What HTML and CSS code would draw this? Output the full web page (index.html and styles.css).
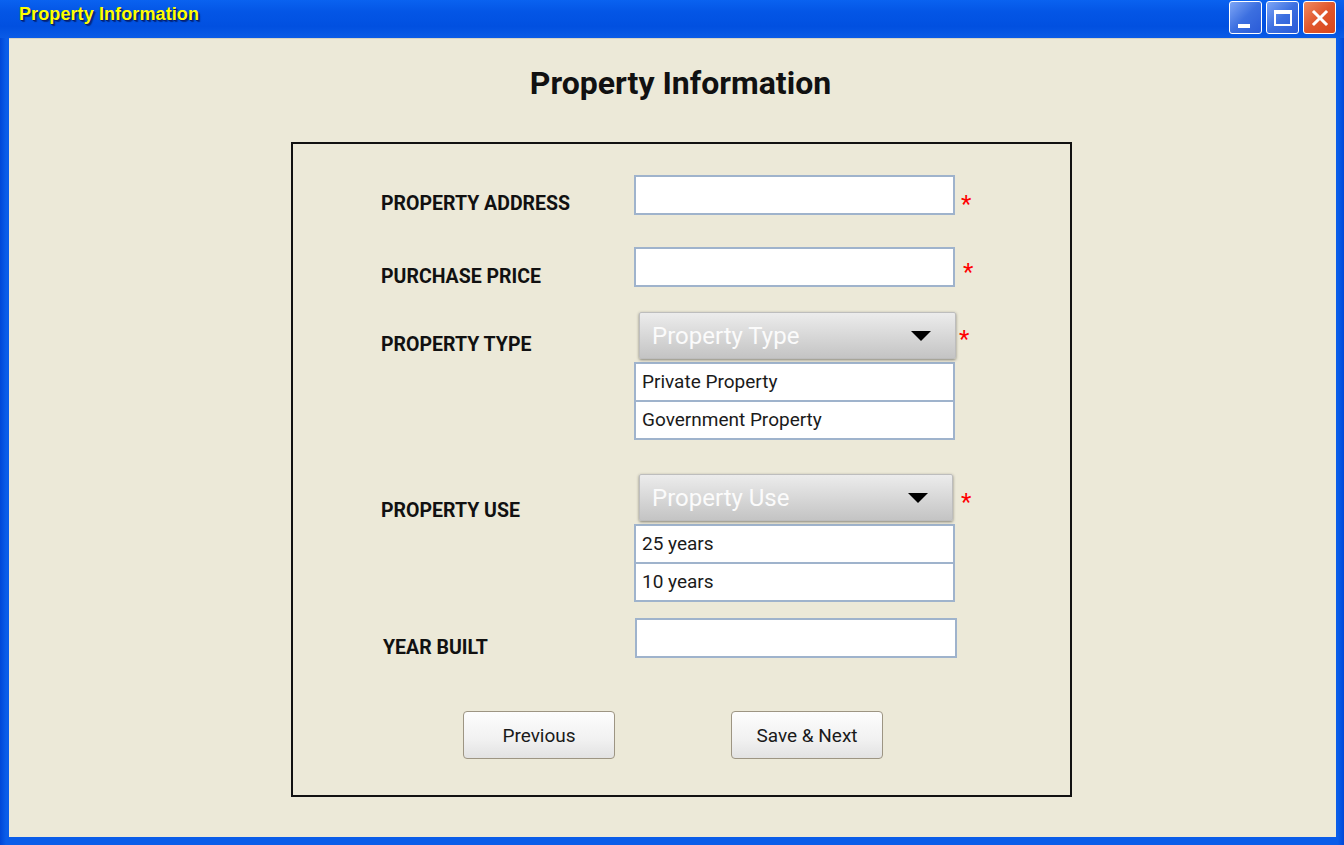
FILE: index.html
```html
<!DOCTYPE html>
<html lang="en">
<head>
    <meta charset="UTF-8">
    <title>Property Information</title>
    <link rel="stylesheet" href="styles.css">
</head>
<body>
<div class="window">
    <div class="titlebar">
        <span class="titlebar-text">Property Information</span>
        <div class="win-buttons">
            <span class="win-btn"><span class="icon-min"></span></span>
            <span class="win-btn"><span class="icon-max"></span></span>
            <span class="win-btn close">
                <svg width="20" height="20" viewBox="0 0 20 20"><path d="M4 4 L16 16 M16 4 L4 16" stroke="#fff" stroke-width="3" stroke-linecap="square"/></svg>
            </span>
        </div>
    </div>

    <div class="content">
        <h1>Property Information</h1>

        <div class="form-box">
            <div class="row row-address">
                <label class="label">PROPERTY ADDRESS</label>
                <div class="field">
                    <input class="text-input" type="text">
                    <span class="required">*</span>
                </div>
            </div>

            <div class="row row-price">
                <label class="label">PURCHASE PRICE</label>
                <div class="field">
                    <input class="text-input" type="text">
                    <span class="required">*</span>
                </div>
            </div>

            <div class="row row-type">
                <label class="label">PROPERTY TYPE</label>
                <div>
                    <div class="field">
                        <div class="dropdown">
                            <span>Property Type</span>
                            <span class="arrow"></span>
                        </div>
                        <span class="required">*</span>
                    </div>
                    <ul class="options">
                        <li>Private Property</li>
                        <li>Government Property</li>
                    </ul>
                </div>
            </div>

            <div class="row row-use">
                <label class="label">PROPERTY USE</label>
                <div>
                    <div class="field">
                        <div class="dropdown narrow">
                            <span>Property Use</span>
                            <span class="arrow"></span>
                        </div>
                        <span class="required">*</span>
                    </div>
                    <ul class="options">
                        <li>25 years</li>
                        <li>10 years</li>
                    </ul>
                </div>
            </div>

            <div class="row row-year">
                <label class="label">YEAR BUILT</label>
                <div class="field">
                    <input class="text-input wide" type="text">
                </div>
            </div>

            <div class="actions">
                <button class="btn">Previous</button>
                <button class="btn">Save &amp; Next</button>
            </div>
        </div>
    </div>
</div>
</body>
</html>
```

FILE: styles.css
```css
body {
    margin: 0;
    padding: 0;
    font-family: Roboto, "Liberation Sans", sans-serif;
    background-color: #0a5be6;
}

.window {
    width: 1344px;
    height: 845px;
    background: linear-gradient(to right, #0047d8, #0a5de9 6px, #0a5de9 calc(100% - 6px), #0047d8);
    display: flex;
    flex-direction: column;
    overflow: hidden;
}

.titlebar {
    height: 38px;
    flex-shrink: 0;
    display: flex;
    align-items: flex-start;
    justify-content: space-between;
    background: linear-gradient(#0a62f0 0%, #0456e6 30%, #0150e0 70%, #0a5be6 100%);
}

.titlebar-text {
    margin: 4px 0 0 19px;
    font-family: "Liberation Sans", Arial, sans-serif;
    font-weight: bold;
    font-size: 18px;
    letter-spacing: 0.1px;
    color: #ffff00;
    text-shadow: 1px 1px 0 #0a1f70, 2px 2px 1px rgba(0, 0, 40, 0.5);
}

.win-buttons {
    display: flex;
    gap: 4px;
    margin: 1px 8px 0 0;
}

.win-btn {
    width: 31px;
    height: 31px;
    border: 1px solid #fff;
    border-radius: 3px;
    background: linear-gradient(135deg, #7ea6f6, #3c6fe0 50%, #2a5bd8);
    display: flex;
    align-items: center;
    justify-content: center;
}

.win-btn.close {
    background: linear-gradient(135deg, #f08a60, #e0562c 50%, #d8461c);
}

.icon-min {
    width: 12px;
    height: 4px;
    background: #fff;
    margin-top: 16px;
    margin-right: 4px;
}

.icon-max {
    width: 18px;
    height: 16px;
    border: 2px solid #fff;
    border-top-width: 4px;
    box-sizing: border-box;
}

.content {
    flex: 1;
    margin: 0 8px 8px 9px;
    background-color: #ece9d8;
    border-top: 1px solid #d8d4c4;
}

h1 {
    margin: 24px 0 0;
    padding-left: 16px;
    text-align: center;
    font-size: 32px;
    line-height: 40px;
    font-weight: bold;
    color: #111;
}

.form-box {
    box-sizing: border-box;
    width: 781px;
    height: 655px;
    margin: 39px 0 0 282px;
    border: 2px solid #111;
    padding: 31px 0 0 88px;
}

.row {
    display: grid;
    grid-template-columns: 253px 340px;
    align-items: start;
}

.label {
    font-size: 19.5px;
    font-weight: bold;
    line-height: 20px;
    color: #111;
}

.row-address .label { margin-top: 19px; }
.row-price { margin-top: 32px; }
.row-price .label { margin-top: 20px; }
.row-type { margin-top: 25px; }
.row-type .label { margin-top: 23px; }
.row-use { margin-top: 34px; }
.row-use .label { margin-top: 27px; }
.row-year { margin-top: 16px; }
.row-year .label { margin-top: 20px; margin-left: 2px; }

.field {
    display: flex;
    align-items: center;
}

.text-input {
    box-sizing: border-box;
    width: 321px;
    height: 40px;
    border: 2px solid #9fb3cc;
    background: #fff;
    margin: 0;
    padding: 0;
}

.text-input.wide {
    width: 322px;
    margin-left: 1px;
}

.required {
    color: #ff0000;
    font-size: 24px;
    line-height: 20px;
    margin-left: 6px;
    margin-top: 18px;
}

.row-price .required {
    margin-top: 10px;
    margin-left: 8px;
}

.row-type .required {
    margin-left: 3px;
    margin-top: 6px;
}

.row-use .required {
    margin-left: 8px;
    margin-top: 8px;
}

.dropdown {
    box-sizing: border-box;
    width: 317px;
    height: 47px;
    margin-left: 5px;
    padding: 0 24px 0 12px;
    display: flex;
    align-items: center;
    justify-content: space-between;
    background: linear-gradient(#ececec, #d6d6d6 55%, #c4c4c4);
    border: 1px solid #bdbdbd;
    border-radius: 2px;
    box-shadow: 0 1px 3px rgba(0, 0, 0, 0.45);
    color: #fbfbfb;
    font-size: 24px;
}

.dropdown.narrow {
    width: 314px;
}

.arrow {
    width: 0;
    height: 0;
    border-left: 10px solid transparent;
    border-right: 10px solid transparent;
    border-top: 10px solid #000;
}

.options {
    list-style: none;
    margin: 3px 0 0;
    padding: 0;
    width: 321px;
    box-sizing: border-box;
    border: 2px solid #9fb3cc;
    background: #fff;
}

.options li {
    height: 36px;
    line-height: 36px;
    padding-left: 6px;
    font-size: 19px;
    color: #1a1a1a;
}

.options li + li {
    border-top: 2px solid #9fb3cc;
}

.actions {
    display: flex;
    gap: 116px;
    margin: 53px 0 0 82px;
}

.btn {
    width: 152px;
    height: 48px;
    border: 1px solid #9d9583;
    border-radius: 4px;
    background: linear-gradient(#fdfdfd, #f1f1f1 60%, #e2e2e2);
    font-family: Roboto, "Liberation Sans", sans-serif;
    font-size: 19px;
    color: #1a1a1a;
}
```
